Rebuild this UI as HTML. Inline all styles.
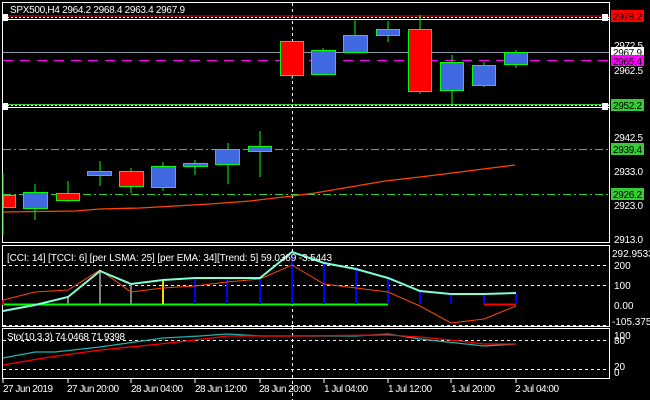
<!DOCTYPE html>
<html><head><meta charset="utf-8"><style>
html,body{margin:0;padding:0;background:#000;}
svg{display:block;font-family:"Liberation Sans",sans-serif;}
text{font-size:10px;fill:#fff;}
</style></head><body>
<svg width="650" height="400" viewBox="0 0 650 400" xmlns="http://www.w3.org/2000/svg">
<rect width="650" height="400" fill="#000"/>
<rect x="2.5" y="2.5" width="607" height="240" fill="none" stroke="#fff" stroke-width="1"/>
<rect x="2.5" y="245.5" width="607" height="81" fill="none" stroke="#fff" stroke-width="1"/>
<rect x="2.5" y="328.5" width="607" height="50" fill="none" stroke="#fff" stroke-width="1"/>
<line x1="292.5" y1="3" x2="292.5" y2="400" stroke="#fff" stroke-dasharray="3,3"/>
<line x1="3" y1="16" x2="609" y2="16" stroke="#ff0000" stroke-width="1"/>
<line x1="3" y1="17.5" x2="609" y2="17.5" stroke="#fff" stroke-dasharray="2,2"/>
<line x1="3" y1="19.5" x2="609" y2="19.5" stroke="#fff"/>
<rect x="2" y="14" width="6" height="7" fill="#fff"/><rect x="602" y="14" width="6" height="7" fill="#fff"/>
<line x1="3" y1="52.5" x2="609" y2="52.5" stroke="#8a9aa8"/>
<line x1="3" y1="60.5" x2="609" y2="60.5" stroke="#ff00ff" stroke-dasharray="10,7"/>
<line x1="3" y1="104.5" x2="609" y2="104.5" stroke="#33cc33"/>
<line x1="3" y1="105.5" x2="609" y2="105.5" stroke="#fff" stroke-dasharray="2,2"/>
<line x1="3" y1="107.5" x2="609" y2="107.5" stroke="#fff"/>
<rect x="2" y="103" width="6" height="7" fill="#fff"/><rect x="602" y="103" width="6" height="7" fill="#fff"/>
<line x1="3" y1="149.5" x2="609" y2="149.5" stroke="#33cc33" stroke-dasharray="8,3,2,3"/>
<line x1="3" y1="194.5" x2="609" y2="194.5" stroke="#33cc33" stroke-dasharray="8,3,2,3"/>
<polyline fill="none" stroke="#ff4500" stroke-width="1.3" points="3,212 75,211 100,209 140,208 175,206 210,204 250,201 292,196 315,193 350,187 385,181 420,177 460,172 515,165"/>
<g stroke="#00ff00" stroke-width="1">
<line x1="292" y1="75" x2="292" y2="79"/><rect x="280.5" y="41.5" width="23" height="34" fill="#ff0000"/>
<line x1="323" y1="48" x2="323" y2="50"/><rect x="311.5" y="50.5" width="24" height="24" fill="#4169e1"/>
<line x1="355" y1="19" x2="355" y2="35"/><rect x="343.5" y="35.5" width="24" height="17" fill="#4169e1"/>
<line x1="388" y1="21" x2="388" y2="42"/><rect x="376.5" y="29.5" width="23" height="6" fill="#4169e1"/>
<line x1="420" y1="15" x2="420" y2="94"/><rect x="408.5" y="29.5" width="23" height="62" fill="#ff0000"/>
<line x1="452" y1="55" x2="452" y2="105"/><rect x="440.5" y="62.5" width="23" height="28" fill="#4169e1"/>
<line x1="484" y1="62" x2="484" y2="87"/><rect x="472.5" y="65.5" width="23" height="20" fill="#4169e1"/>
<line x1="516" y1="50" x2="516" y2="68"/><rect x="504.5" y="52.5" width="23" height="12" fill="#4169e1"/>
<line x1="3" y1="173" x2="3" y2="235"/><rect x="3.5" y="195.5" width="12" height="12" fill="#ff0000"/>
<line x1="35" y1="184" x2="35" y2="220"/><rect x="23.5" y="192.5" width="24" height="16" fill="#4169e1"/>
<line x1="68" y1="181" x2="68" y2="202"/><rect x="56.5" y="193.5" width="23" height="7" fill="#ff0000"/>
<line x1="100" y1="161" x2="100" y2="186"/><rect x="87.5" y="171.5" width="24" height="4" fill="#4169e1"/>
<line x1="131" y1="168" x2="131" y2="193"/><rect x="119.5" y="171.5" width="24" height="15" fill="#ff0000"/>
<line x1="163" y1="162" x2="163" y2="191"/><rect x="151.5" y="166.5" width="24" height="21" fill="#4169e1"/>
<line x1="195" y1="160" x2="195" y2="175"/><rect x="183.5" y="163.5" width="24" height="3" fill="#4169e1"/>
<line x1="228" y1="143" x2="228" y2="184"/><rect x="215.5" y="149.5" width="24" height="15" fill="#4169e1"/>
<line x1="260" y1="131" x2="260" y2="177"/><rect x="248.5" y="146.5" width="23" height="5" fill="#4169e1"/>
</g>
<text x="10" y="13" textLength="175">SPX500,H4  2964.2 2968.4 2963.4 2967.9</text>
<g>
<rect x="611" y="10" width="33" height="12" fill="#ff0000"/><text x="613" y="20" textLength="29" style="fill:#000">2978.2</text>
<text x="614" y="49" textLength="29">2972.5</text>
<rect x="611" y="47" width="33" height="9" fill="#fff"/><text x="613" y="56" textLength="29" style="fill:#000">2967.9</text>
<rect x="611" y="55" width="33" height="11" fill="#ff00ff"/><text x="613" y="65" textLength="29" style="fill:#000">2965.4</text>
<text x="614" y="74" textLength="29">2962.5</text>
<rect x="611" y="99" width="33" height="12" fill="#33cc33"/><text x="613" y="109" textLength="29" style="fill:#000">2952.2</text>
<text x="614" y="141" textLength="29">2942.5</text>
<rect x="611" y="143" width="33" height="12" fill="#33cc33"/><text x="613" y="153" textLength="29" style="fill:#000">2939.4</text>
<text x="614" y="175" textLength="29">2933.0</text>
<rect x="611" y="188" width="33" height="12" fill="#33cc33"/><text x="613" y="198" textLength="29" style="fill:#000">2926.2</text>
<text x="614" y="209" textLength="29">2923.0</text>
<text x="614" y="243" textLength="29">2913.0</text>
</g>
<g stroke="#fff" stroke-dasharray="3,3">
<line x1="3" y1="265.5" x2="609" y2="265.5"/><line x1="3" y1="285.5" x2="609" y2="285.5"/><line x1="3" y1="325.5" x2="609" y2="325.5"/>
</g>
<line x1="3" y1="304.5" x2="388" y2="304.5" stroke="#00ff00" stroke-width="2"/>
<line x1="484" y1="304.5" x2="516" y2="304.5" stroke="#ff0000" stroke-width="2"/>
<g stroke-width="2">
<line x1="68" y1="304" x2="68" y2="297" stroke="#808080"/>
<line x1="100" y1="304" x2="100" y2="271" stroke="#808080"/>
<line x1="131" y1="304" x2="131" y2="284" stroke="#808080"/>
<line x1="163" y1="304" x2="163" y2="280" stroke="#ffd700"/>
<g stroke="#0000ff">
<line x1="195" y1="304" x2="195" y2="278"/><line x1="227" y1="304" x2="227" y2="278"/><line x1="260" y1="304" x2="260" y2="278"/>
<line x1="292" y1="304" x2="292" y2="252"/><line x1="324" y1="304" x2="324" y2="263"/><line x1="356" y1="304" x2="356" y2="269"/>
<line x1="388" y1="304" x2="388" y2="278"/><line x1="420" y1="304" x2="420" y2="291"/><line x1="451" y1="304" x2="451" y2="294"/>
<line x1="484" y1="304" x2="484" y2="294"/><line x1="516" y1="304" x2="516" y2="293"/>
</g>
<line x1="3" y1="300" x2="3" y2="305" stroke="#ff0000"/>
</g>
<polyline fill="none" stroke="#ff4500" stroke-width="1" points="3,300 35,292 68,290 100,270 131,292 163,288 195,286 227,282 260,279 292,265 324,284 356,288 388,292 420,306 451,323 484,319 516,306"/>
<polyline fill="none" stroke="#7fffd4" stroke-width="2" points="3,311 35,305 68,297 100,271 131,284 163,280 195,278 260,278 292,252 324,263 356,269 388,278 420,291 451,294 484,294 516,293"/>
<text x="7" y="261" textLength="325">[CCI: 14] [TCCI: 6] [per LSMA: 25] [per EMA: 34][Trend: 5]  59.0369 -3.5443</text>
<text x="612" y="257">292.9533</text>
<text x="614" y="269">200</text>
<text x="614" y="289">100</text>
<text x="614" y="309">0.00</text>
<text x="612" y="325">-105.375</text>
<g stroke="#fff" stroke-dasharray="3,3">
<line x1="3" y1="340.5" x2="609" y2="340.5"/><line x1="3" y1="369.5" x2="609" y2="369.5"/>
</g>
<polyline fill="none" stroke="#20b2aa" stroke-width="1.3" points="3,358 35,352 55,352 100,347 163,338 200,336 227,334 260,336 356,336 388,334 420,339 484,346 516,344"/>
<polyline fill="none" stroke="#ff0000" stroke-width="1.3" points="3,365 50,357 100,350 160,344 195,340 227,336 292,336 388,335 420,337 460,341 484,344 516,344"/>
<text x="7" y="340" textLength="118">Sto(10,3,3) 74.0468 71.9398</text>
<text x="614" y="339">100</text><text x="614" y="344">80</text>
<text x="614" y="370">20</text><text x="614" y="376">0</text>
<g stroke="#fff">
<line x1="3" y1="379" x2="3" y2="383"/><line x1="68" y1="379" x2="68" y2="383"/><line x1="131" y1="379" x2="131" y2="383"/>
<line x1="195" y1="379" x2="195" y2="383"/><line x1="260" y1="379" x2="260" y2="383"/><line x1="324" y1="379" x2="324" y2="383"/>
<line x1="388" y1="379" x2="388" y2="383"/><line x1="451" y1="379" x2="451" y2="383"/><line x1="516" y1="379" x2="516" y2="383"/>
</g>
<text x="3" y="392" textLength="50">27 Jun 2019</text>
<text x="67" y="392" textLength="52">27 Jun 20:00</text>
<text x="131" y="392" textLength="52">28 Jun 04:00</text>
<text x="195" y="392" textLength="52">28 Jun 12:00</text>
<text x="259" y="392" textLength="52">28 Jun 20:00</text>
<text x="324" y="392" textLength="44">1 Jul 04:00</text>
<text x="388" y="392" textLength="44">1 Jul 12:00</text>
<text x="451" y="392" textLength="44">1 Jul 20:00</text>
<text x="515" y="392" textLength="44">2 Jul 04:00</text>
</svg>
</body></html>
